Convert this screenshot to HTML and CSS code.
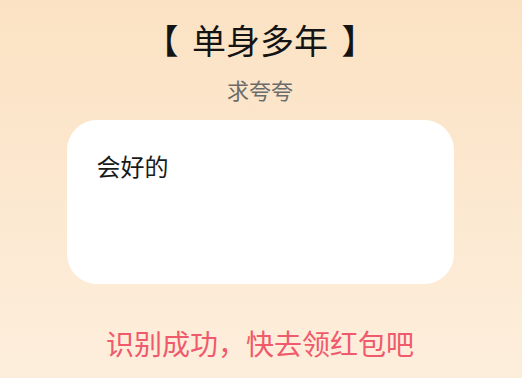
FILE: index.html
```html
<!DOCTYPE html>
<html lang="zh">
<head>
<meta charset="utf-8">
<link rel="stylesheet" href="styles.css">
</head>
<body>
<div class="page">
  <h1 class="title">【 单身多年 】</h1>
  <p class="subtitle">求夸夸</p>
  <div class="card">
    <p class="card-text">会好的</p>
  </div>
  <p class="result">识别成功，快去领红包吧</p>
</div>
</body>
</html>
```
FILE: styles.css
```css
html, body {
  margin: 0;
  padding: 0;
}
body {
  width: 522px;
  height: 378px;
  overflow: hidden;
  background: linear-gradient(to bottom, #fbe2c3 0%, #fdeedc 100%);
  font-family: "Noto Sans CJK SC", "Noto Sans", sans-serif;
}
.page {
  display: flex;
  flex-direction: column;
  align-items: center;
  padding-top: 18px;
  padding-right: 2px;
}
.title {
  margin: 0;
  font-size: 34px;
  font-weight: 400;
  line-height: 44px;
  color: #141414;
  white-space: pre;
  word-spacing: 6px;
}
.subtitle {
  margin: 13px 0 0;
  font-size: 22px;
  line-height: 28px;
  color: #6b6b6b;
}
.card {
  box-sizing: border-box;
  margin-top: 17px;
  width: 387px;
  height: 164px;
  background: #ffffff;
  border-radius: 30px;
  padding: 30px 30px;
}
.card-text {
  margin: 0;
  font-size: 24px;
  line-height: 32px;
  color: #1a1a1a;
}
.result {
  margin: 41px 0 0;
  font-size: 28px;
  line-height: 36px;
  color: #ef5a6c;
}
```
